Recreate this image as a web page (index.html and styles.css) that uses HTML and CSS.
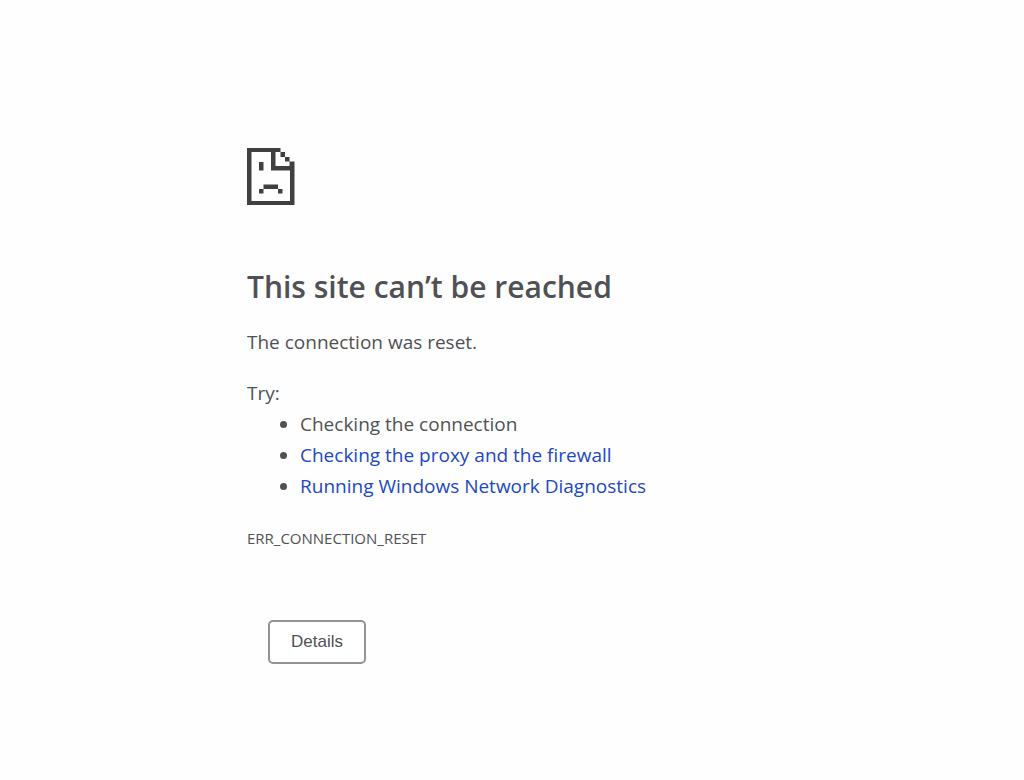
FILE: index.html
```html
<!DOCTYPE html>
<html lang="en">

<head>
	<meta charset="UTF-8">
	<meta name="viewport" content="width=device-width, initial-scale=1.0">

	<title>This site can’t be reached</title>

	<link rel="stylesheet" href="styles.css">
</head>

<body>
	<main class="error-page">
		<svg class="icon" viewBox="0 0 48 57" aria-hidden="true">
			<g fill="#404040">
				<!-- sheet outline -->
				<path d="M0 0H33.500V4H28.500V18H47.500V57H0zM4.500 4V53H43V22.500H24V4z" fill-rule="evenodd" />
				<!-- folded corner -->
				<path d="M33.500 4H38V9H33.500zM38 9H42.500V13.500H38zM42.500 13.500H47.500V18H42.500z" />
				<!-- face -->
				<path d="M12 14H16.500V22.500H12zM16.500 36.500H31V41H16.500zM12 41H16.500V45.500H12zM31 41H35.500V45.500H31z" />
			</g>
		</svg>

		<h1>This site can’t be reached</h1>
		<p>The connection was reset.</p>

		<div class="suggestions">
			<p>Try:</p>
			<ul>
				<li>Checking the connection</li>
				<li><a href="#proxy">Checking the proxy and the firewall</a></li>
				<li><a href="#diagnostics">Running Windows Network Diagnostics</a></li>
			</ul>
		</div>

		<div class="error-code">ERR_CONNECTION_RESET</div>

		<button class="details" type="button">Details</button>
	</main>
</body>

</html>
```
FILE: styles.css
```css
* {
	box-sizing: border-box;
}

body {
	margin: 0;
	background-color: #fefefe;
	color: #505154;
	font: 19px/31px "Segoe UI", "Open Sans", "Noto Sans", sans-serif;
}

.error-page {
	max-width: 778px;
	margin: 0 auto;
	padding: 148px 124px 40px;
}

.icon {
	display: block;
	width: 48px;
	height: 57px;
}

h1 {
	margin: 62px 0 20px;
	font-size: 30px;
	font-weight: 600;
	line-height: 40px;
}

p {
	margin: 0;
}

.suggestions {
	margin-top: 20px;
}

ul {
	margin: 0;
	padding-left: 53px;
}

a {
	color: #2148c0;
	text-decoration: none;
}

.error-code {
	margin-top: 21px;
	font-size: 15px;
}

.details {
	margin: 66px 0 0 21px;
	padding: 0 21px;
	height: 44px;
	border: 2px solid #909498;
	border-radius: 5px;
	background-color: #fff;
	color: #505154;
	font: 17px "Liberation Sans", Arial, sans-serif;
}
```
